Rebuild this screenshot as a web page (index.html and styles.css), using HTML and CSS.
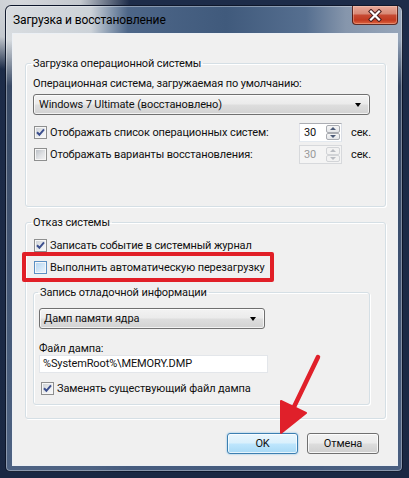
FILE: index.html
```html
<!DOCTYPE html>
<html lang="ru">
<head>
<meta charset="utf-8">
<title>Загрузка и восстановление</title>
<link rel="stylesheet" href="styles.css">
</head>
<body>
<div class="desktop">
  <div class="window">
    <div class="titlebar">
      <span class="title">Загрузка и восстановление</span>
      <span class="close" aria-label="Закрыть">
        <svg width="14" height="13" viewBox="0 0 14 13">
          <path d="M3 2.5 L11 10.5 M11 2.5 L3 10.5" stroke="#4a2020" stroke-width="4.2" stroke-linecap="square" fill="none"/>
          <path d="M3 2.5 L11 10.5 M11 2.5 L3 10.5" stroke="#ffffff" stroke-width="2.2" stroke-linecap="square" fill="none"/>
        </svg>
      </span>
    </div>
    <div class="client">
      <fieldset class="group g1">
        <legend>Загрузка операционной системы</legend>
        <div class="label">Операционная система, загружаемая по умолчанию:</div>
        <div class="combo combo-os"><span>Windows 7 Ultimate (восстановлено)</span><i class="tri"></i></div>
        <div class="row spinrow first">
          <span class="check on"><svg width="11" height="11" viewBox="0 0 11 11"><path d="M2 5.2 L4.4 7.8 L9 2.4" stroke="#3c4f8e" stroke-width="2" fill="none"/></svg></span>
          <span class="text">Отображать список операционных систем:</span>
          <span class="spin"><span class="val">30</span><span class="btns"><b class="sb"><i class="up"></i></b><b class="sb"><i class="dn"></i></b></span></span>
          <span class="sec">сек.</span>
        </div>
        <div class="row spinrow">
          <span class="check"></span>
          <span class="text">Отображать варианты восстановления:</span>
          <span class="spin off"><span class="val">30</span><span class="btns"><b class="sb"><i class="up"></i></b><b class="sb"><i class="dn"></i></b></span></span>
          <span class="sec">сек.</span>
        </div>
      </fieldset>

      <fieldset class="group g2">
        <legend>Отказ системы</legend>
        <div class="row crow">
          <span class="check on"><svg width="11" height="11" viewBox="0 0 11 11"><path d="M2 5.2 L4.4 7.8 L9 2.4" stroke="#3c4f8e" stroke-width="2" fill="none"/></svg></span>
          <span class="text">Записать событие в системный журнал</span>
        </div>
        <div class="row crow second">
          <span class="check hot"></span>
          <span class="text">Выполнить автоматическую перезагрузку</span>
        </div>
        <fieldset class="group g3">
          <legend>Запись отладочной информации</legend>
          <div class="combo combo-dump"><span>Дамп памяти ядра</span><i class="tri"></i></div>
          <div class="label flabel">Файл дампа:</div>
          <div class="edit">%SystemRoot%\MEMORY.DMP</div>
          <div class="row crow third">
            <span class="check on"><svg width="11" height="11" viewBox="0 0 11 11"><path d="M2 5.2 L4.4 7.8 L9 2.4" stroke="#3c4f8e" stroke-width="2" fill="none"/></svg></span>
            <span class="text">Заменять существующий файл дампа</span>
          </div>
        </fieldset>
      </fieldset>

      <div class="buttons">
        <span class="btn default">OK</span>
        <span class="btn">Отмена</span>
      </div>
    </div>
    <div class="highlight"></div>
  </div>
  <svg class="annot" width="409" height="478" viewBox="0 0 409 478">
    <path d="M318 352 L293 404" stroke="#e0202a" stroke-width="4.5" stroke-linecap="round" fill="none"/>
    <polygon points="281,428 281,396 306,408" fill="#e0202a" stroke="#e0202a" stroke-width="2" stroke-linejoin="round"/>
  </svg>
</div>
</body>
</html>
```

FILE: styles.css
```css
* { box-sizing: border-box; }
html, body { margin: 0; padding: 0; }
body {
  width: 409px;
  height: 478px;
  overflow: hidden;
  font-family: Roboto, "Noto Sans", sans-serif;
  font-size: 11px;
  letter-spacing: -0.12px;
  color: #111;
  background:
    radial-gradient(ellipse 110px 70px at 20px 0px, #d4d7db 0%, #c3c8ce 55%, rgba(30,45,75,0) 100%),
    linear-gradient(180deg, #1d2c49 0%, #1a2843 100%);
}
.desktop { position: relative; width: 409px; height: 478px; }

.window {
  position: relative;
  margin: 5px 0 0 5px;
  width: 398px;
  height: 467px;
  border: 1px solid rgba(8, 16, 34, 0.9);
  border-radius: 6px 6px 5px 5px;
  padding: 0 4px 5px 6px;
  display: flex;
  flex-direction: column;
  box-shadow: inset 0 0 0 1px rgba(255,255,255,0.35);
  background:
    linear-gradient(180deg, rgba(0,0,0,0) 0px, rgba(0,0,0,0) 34px, rgba(40,58,88,0.9) 80px, rgba(70,92,126,0.95) 100%),
    linear-gradient(90deg, #d8dce0 0px, #ccd2d8 85px, #8c9db2 103px, #4d6688 122px, #405a7c 220px, #566f90 300px, #8696ac 340px, #97a6ba 398px);
}

.titlebar {
  height: 27px;
  display: flex;
  align-items: center;
  justify-content: space-between;
  padding-left: 1px;
}
.title {
  line-height: 15px;
  padding-top: 1px;
  font-size: 12px;
  color: #000;
}
.close {
  align-self: flex-start;
  width: 46px;
  height: 19px;
  display: flex;
  align-items: center;
  justify-content: center;
  border: 1px solid rgba(70, 22, 18, 0.85);
  border-top: none;
  border-radius: 0 0 4px 4px;
  background: linear-gradient(180deg, #e6a899 0%, #d98a77 42%, #c64a33 52%, #c23a20 78%, #de6440 100%);
  box-shadow: inset 0 0 0 1px rgba(255,220,200,0.35);
}

.client {
  flex: 1;
  border: 1px solid rgba(235, 240, 246, 0.85);
  background: #f0f0f0;
  padding: 22px 11px 0 12px;
  display: flex;
  flex-direction: column;
}

.group {
  margin: 0;
  border: 1px solid #d5dfe5;
  border-radius: 3px;
  box-shadow: inset 1px 1px 0 #fff, 1px 1px 0 #fff;
  min-width: 0;
}
.group legend {
  padding: 0 2px;
  line-height: 15px;
}
.g1 { padding: 5px 15px 42px 7px; }
.g1 legend { margin-left: -2px; }
.g2 { padding: 8px 15px 13px 7px; margin-top: 8px; }
.g2 legend { margin-left: -2px; }
.g3 { padding: 8px 0 8px 5px; margin-top: 10px; }
.g3 legend { margin-left: -1px; }

.label { line-height: 15px; }
.flabel { margin-top: 13px; line-height: 13px; }

.combo {
  height: 21px;
  border: 1px solid #707070;
  border-radius: 3px;
  display: flex;
  align-items: center;
  justify-content: space-between;
  background: linear-gradient(180deg, #f3f3f3 0%, #ebebeb 48%, #dedede 52%, #d2d2d2 100%);
  box-shadow: inset 0 0 0 1px rgba(255,255,255,0.7);
}
.combo-os { margin-top: 3px; padding: 0 8px 0 5px; }
.combo-dump { width: 226px; padding: 0 8px 0 4px; }
.tri {
  width: 0; height: 0;
  border-left: 3.5px solid transparent;
  border-right: 3.5px solid transparent;
  border-top: 4px solid #000;
}

.row { display: flex; align-items: center; }
.spinrow { height: 19px; margin-top: 3px; margin-right: -5px; }
.spinrow.first { margin-top: 8px; }
.crow { height: 15px; }
.crow.second { margin-top: 7px; }
.crow.third { margin-top: 8px; }
.row .text { margin-left: 3px; white-space: nowrap; }
.spinrow .text { flex: 1; }

.check {
  flex: none;
  width: 13px;
  height: 13px;
  margin-left: 1px;
  border: 1px solid #8e8f8f;
  display: flex;
  align-items: center;
  justify-content: center;
  background: linear-gradient(135deg, #b6bbc2 0%, #dfe1e4 55%, #f4f4f5 100%);
  box-shadow: inset 0 0 0 1px #f6f6f6;
}
.check.on { background: linear-gradient(135deg, #c9cdd2 0%, #eceef0 60%, #fafafa 100%); }
.check.hot {
  border-color: #5b8fc3;
  background: linear-gradient(135deg, #b3d4f1 0%, #d2e6f7 55%, #eef6fd 100%);
}
.g3 .check { margin-left: 2px; }

.spin {
  width: 43px;
  height: 19px;
  border: 1px solid #abadb3;
  border-color: #abadb3 #dbdfe6 #e3e9ef #e2e3ea;
  background: #fff;
  display: flex;
  align-items: stretch;
  padding: 1px;
}
.spin .val { flex: 1; padding-left: 3px; line-height: 15px; }
.btns { width: 14px; display: flex; flex-direction: column; gap: 0; }
.sb {
  flex: 1;
  border: 1px solid #a9acb2;
  border-radius: 2px;
  background: linear-gradient(180deg, #f6f6f6 0%, #e4e6e9 100%);
  display: flex;
  align-items: center;
  justify-content: center;
}
.up, .dn { width: 0; height: 0; border-left: 3px solid transparent; border-right: 3px solid transparent; }
.up { border-bottom: 3px solid #4c5b78; }
.dn { border-top: 3px solid #4c5b78; }
.spin.off { background: #f4f4f4; border-color: #d7d9dc; color: #9a9a9a; }
.spin.off .sb { border-color: #d2d4d7; background: #f2f2f2; }
.spin.off .up { border-bottom-color: #b9bcc2; }
.spin.off .dn { border-top-color: #b9bcc2; }
.sec { width: 24px; margin-left: 9px; white-space: nowrap; }

.edit {
  width: 229px;
  height: 18px;
  border: 1px solid #e3e6ea;
  background: #fff;
  padding-left: 3px;
  line-height: 16px;
  white-space: nowrap;
}

.buttons {
  margin-top: 14px;
  display: flex;
  justify-content: flex-end;
  gap: 9px;
  padding-right: 7px;
}
.btn {
  width: 72px;
  height: 21px;
  border: 1px solid #707070;
  border-radius: 3px;
  display: flex;
  align-items: center;
  justify-content: center;
  background: linear-gradient(180deg, #f2f2f2 0%, #ebebeb 48%, #dddddd 52%, #cfcfcf 100%);
  box-shadow: inset 0 0 0 1px rgba(255,255,255,0.8);
}
.btn.default {
  width: 71px;
  border-color: #3c7fb1;
  background: linear-gradient(180deg, #eaf6fd 0%, #d9f0fc 48%, #bee6fd 52%, #a7d9f5 100%);
  box-shadow: inset 0 0 0 1px rgba(255,255,255,0.7), 0 0 2px rgba(80,170,230,0.8);
}

.highlight {
  position: absolute;
  left: 16px;
  top: 246px;
  width: 252px;
  height: 30px;
  border: 4px solid #e11f27;
  border-radius: 2px;
}
.annot {
  position: absolute;
  left: 0;
  top: 0;
  pointer-events: none;
}
```
